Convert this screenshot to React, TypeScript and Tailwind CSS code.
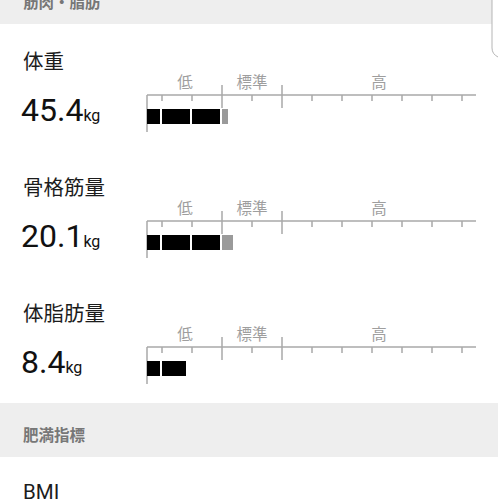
import React from "react";

type Seg = { x: number; w: number; gray?: boolean };

type Metric = {
  label: string;
  value: string;
  segs: Seg[];
};

const metrics: Metric[] = [
  {
    label: "体重",
    value: "45.4",
    segs: [
      { x: 7, w: 13 },
      { x: 22, w: 28 },
      { x: 52, w: 28 },
      { x: 82, w: 6, gray: true },
    ],
  },
  {
    label: "骨格筋量",
    value: "20.1",
    segs: [
      { x: 7, w: 13 },
      { x: 22, w: 28 },
      { x: 52, w: 28 },
      { x: 82, w: 11, gray: true },
    ],
  },
  {
    label: "体脂肪量",
    value: "8.4",
    segs: [
      { x: 7, w: 13 },
      { x: 22, w: 24 },
    ],
  },
];

const ticks = [22, 52, 112, 172, 202, 232, 262, 292, 322];

function Scale({ segs }: { segs: Seg[] }) {
  return (
    <svg width="358" height="64" viewBox="0 0 358 64" className="block shrink-0">
      <g fill="#9e9e9e" fontSize="15.5" textAnchor="middle" fontFamily="Roboto, 'Noto Sans CJK JP', sans-serif">
        <text x="45" y="9" dominantBaseline="central">低</text>
        <text x="112" y="9" dominantBaseline="central">標準</text>
        <text x="239" y="9" dominantBaseline="central">高</text>
      </g>
      <g stroke="#a8a8a8" strokeWidth="1.5">
        <line x1="7" y1="21" x2="336" y2="21" />
        <line x1="7" y1="21" x2="7" y2="58" />
        <line x1="82" y1="11" x2="82" y2="34" />
        <line x1="142" y1="11" x2="142" y2="34" />
        {ticks.map((t) => (
          <line key={t} x1={t} y1="21" x2={t} y2="27" />
        ))}
      </g>
      {segs.map((s, i) => (
        <rect key={i} x={s.x} y="35" width={s.w} height="15" fill={s.gray ? "#9a9a9a" : "#000"} />
      ))}
    </svg>
  );
}

function SectionHeader({ title }: { title: string }) {
  return (
    <div className="h-[54px] bg-[#eeeeee] pl-[23px] pt-[22px]">
      <div className="text-[15.5px] font-bold leading-[22px] text-[#777777]">{title}</div>
    </div>
  );
}

function MetricRow({ m, h }: { m: Metric; h: string }) {
  return (
    <div className={`${h} bg-white pt-[26px]`}>
      <div className="pl-[23px] text-[20.5px] leading-[24px] text-[#1c1c1c]">{m.label}</div>
      <div className="flex items-start">
        <div className="mt-[21px] w-[140px] pl-[21px] leading-[30px] text-[#111]">
          <span className="text-[32px]">{m.value}</span>
          <span className="text-[16px]">kg</span>
        </div>
        <Scale segs={m.segs} />
      </div>
    </div>
  );
}

export default function App() {
  return (
    <div
      className="relative h-[500px] w-[498px] overflow-hidden bg-white"
      style={{ fontFamily: "Roboto, 'Noto Sans CJK JP', sans-serif" }}
    >
      <div className="-mt-[30px]">
        <SectionHeader title="筋肉・脂肪" />
        <MetricRow m={metrics[0]} h="h-[126px]" />
        <MetricRow m={metrics[1]} h="h-[126px]" />
        <MetricRow m={metrics[2]} h="h-[127px]" />
        <SectionHeader title="肥満指標" />
        <div className="bg-white pt-[23px]">
          <div className="pl-[23px] text-[20.5px] leading-[24px] text-[#1c1c1c]">BMI</div>
        </div>
      </div>
      <svg width="8" height="60" viewBox="0 0 8 60" className="absolute right-0 top-0">
        <rect x="2" y="0" width="6" height="60" fill="#fff" />
        <path d="M2 0 V48 Q2 54 8 57" fill="none" stroke="#b5b5b5" strokeWidth="1" />
      </svg>
    </div>
  );
}
